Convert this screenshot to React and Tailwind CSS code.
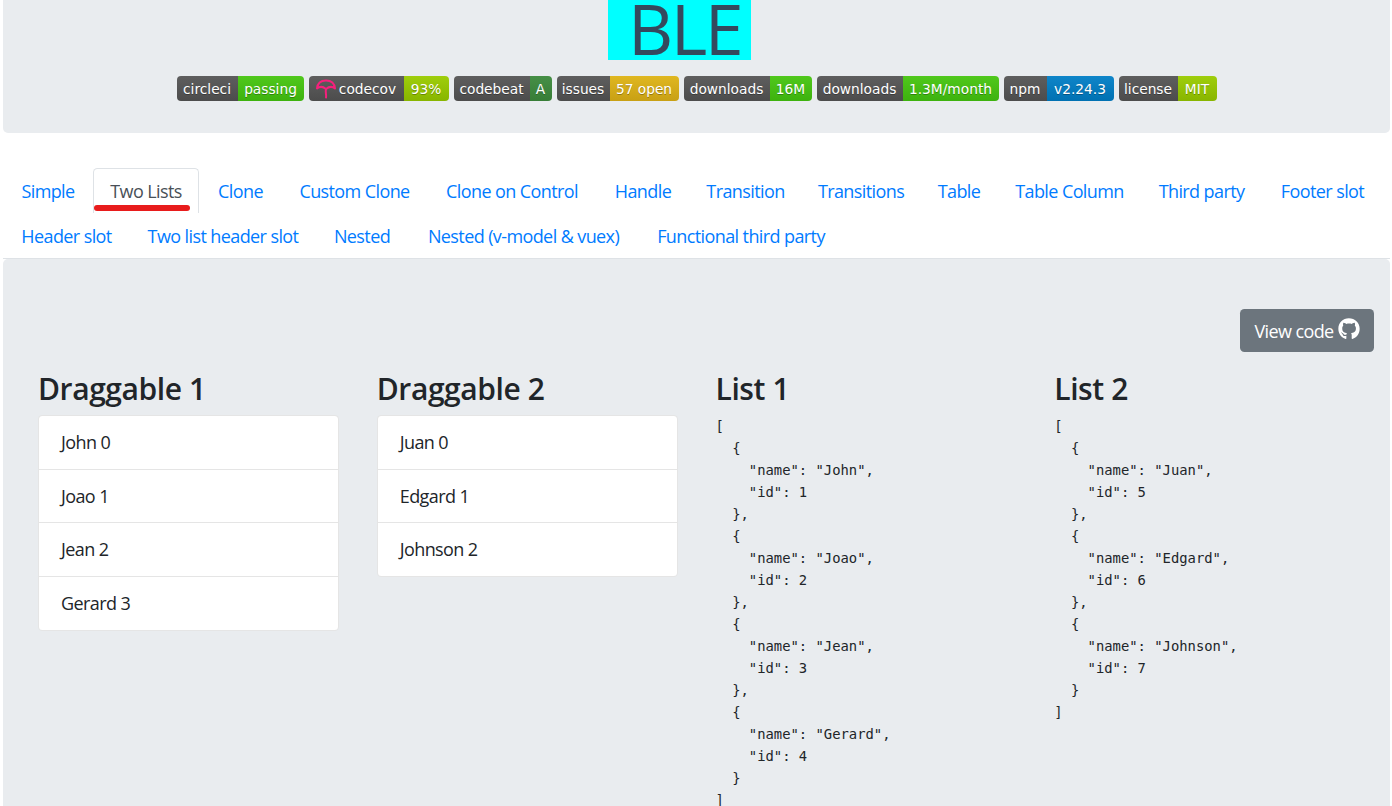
import { FaGithub } from 'react-icons/fa'

const BADGES = [
  { label: 'circleci', value: 'passing', w: 'w-[127px]', lw: 'w-[61px]', color: 'from-[#50c81c] to-[#3db20e]' },
  { label: 'codecov', value: '93%', w: 'w-[140px]', lw: 'w-[95px]', color: 'from-[#9fce0c] to-[#88b500]', icon: true },
  { label: 'codebeat', value: 'A', w: 'w-[98px]', lw: 'w-[76px]', color: 'from-[#468f46] to-[#377d37]' },
  { label: 'issues', value: '57 open', w: 'w-[122px]', lw: 'w-[53px]', color: 'from-[#e0b720] to-[#c8a014]' },
  { label: 'downloads', value: '16M', w: 'w-[128px]', lw: 'w-[86px]', color: 'from-[#50c81c] to-[#3db20e]' },
  { label: 'downloads', value: '1.3M/month', w: 'w-[182px]', lw: 'w-[86px]', color: 'from-[#50c81c] to-[#3db20e]' },
  { label: 'npm', value: 'v2.24.3', w: 'w-[110px]', lw: 'w-[43px]', color: 'from-[#0f85c9] to-[#0071b2]' },
  { label: 'license', value: 'MIT', w: 'w-[98px]', lw: 'w-[59px]', color: 'from-[#9fce0c] to-[#88b500]' },
]

const TABS = [
  { name: 'Simple', w: 'w-[90px]' },
  { name: 'Two Lists', w: 'w-[106px]', active: true },
  { name: 'Clone', w: 'w-[83px]' },
  { name: 'Custom Clone', w: 'w-[145px]' },
  { name: 'Clone on Control', w: 'w-[170px]' },
  { name: 'Handle', w: 'w-[92px]' },
  { name: 'Transition', w: 'w-[113px]' },
  { name: 'Transitions', w: 'w-[118px]' },
  { name: 'Table', w: 'w-[78px]' },
  { name: 'Table Column', w: 'w-[143px]' },
  { name: 'Third party', w: 'w-[121px]' },
  { name: 'Footer slot', w: 'w-[121px]' },
  { name: 'Header slot', w: 'w-[127px]' },
  { name: 'Two list header slot', w: 'w-[186px]' },
  { name: 'Nested', w: 'w-[92px]' },
  { name: 'Nested (v-model & vuex)', w: 'w-[231px]' },
  { name: 'Functional third party', w: 'w-[204px]' },
]

const LIST1 = ['John', 'Joao', 'Jean', 'Gerard']
const LIST2 = ['Juan', 'Edgard', 'Johnson']

const toJson = (names, firstId) =>
  JSON.stringify(names.map((name, i) => ({ name, id: firstId + i })), null, 2)

function CodecovIcon() {
  return (
    <svg viewBox="0 0 20 20" className="w-[20px] h-[20px] mr-[3px] shrink-0" fill="none" stroke="#f5207c" strokeWidth="2" strokeLinecap="round" strokeLinejoin="round">
      <path d="M1 9.500C1.500 4.500 5 1.500 10 1.500s8.500 3 9 8C16.500 7.500 13 7.500 10 10 7 7.500 3.500 7.500 1 9.500z" />
      <path d="M10 10c-.800 3 .500 5 0 8.500" />
    </svg>
  )
}

function Badge({ badge }) {
  return (
    <div className={`${badge.w} flex h-[25px] rounded-[4px] overflow-hidden text-white text-[13.75px] tracking-normal [font-family:'DejaVu_Sans',sans-serif] leading-[26px] [text-shadow:0_1px_0_rgba(1,1,1,0.3)]`}>
      <div className={`${badge.lw} shrink-0 flex items-center justify-center bg-linear-to-b from-[#5e5e5e] to-[#4c4c4c]`}>
        {badge.icon && <CodecovIcon />}
        {badge.label}
      </div>
      <div className={`flex-1 text-center bg-linear-to-b ${badge.color}`}>{badge.value}</div>
    </div>
  )
}

function Tab({ tab }) {
  if (tab.active) {
    return (
      <div className={`${tab.w} relative h-[45px] leading-[45px] text-center text-[#495057] bg-white border border-b-0 border-[#dee2e6] rounded-t-[4.5px] whitespace-nowrap`}>
        {tab.name}
        <span className="absolute left-0 top-[36px] w-[96px] h-[6px] rounded-full bg-[#e81c1c]" />
      </div>
    )
  }
  return <div className={`${tab.w} h-[45px] leading-[47px] text-center text-[#007bff] whitespace-nowrap`}>{tab.name}</div>
}

function Heading({ children }) {
  return <h3 className="text-[30px] leading-[42px] font-semibold tracking-[-0.4px] text-[#212529] mb-[5px]">{children}</h3>
}

function DragList({ title, items }) {
  return (
    <div className="px-[19px]">
      <Heading>{title}</Heading>
      <div className="bg-white border border-black/10 rounded-[4.5px]">
        {items.map((item, i) => (
          <div key={item} className="h-[53.5px] last:h-[53px] px-[22px] leading-[53px] text-[#212529] border-b border-black/10 last:border-b-0">
            {item} {i}
          </div>
        ))}
      </div>
    </div>
  )
}

function JsonList({ title, names, firstId }) {
  return (
    <div className="px-[19px]">
      <Heading>{title}</Heading>
      <pre className="text-[13.85px] leading-[22px] tracking-normal text-[#212529] [font-family:'DejaVu_Sans_Mono',monospace]">{toJson(names, firstId)}</pre>
    </div>
  )
}

export default function App() {
  return (
    <div className="h-[806px] overflow-hidden bg-white pl-[3px] pr-[2px] text-[18px] leading-[27px] [font-family:'Open_Sans',sans-serif] tracking-[-0.6px]">
      <header className="h-[133px] bg-[#e9ecef] rounded-b-[5px] flex flex-col items-center">
        <div className="mr-[34px] w-[143px] h-[60px] pl-[10px] bg-[#0ff] text-[#34495e] text-[70px] leading-[56px] tracking-[-2.5px] text-center">BLE</div>
        <div className="mt-[16px] flex gap-[5px]">
          {BADGES.map((b, i) => <Badge key={i} badge={b} />)}
        </div>
      </header>

      <nav className="mt-[35px] flex flex-wrap border-b border-[#dee2e6]">
        {TABS.map(t => <Tab key={t.name} tab={t} />)}
      </nav>

      <main className="bg-[#e9ecef] rounded-t-[5px] px-[16px] pt-[50px] h-[600px]">
        <div className="flex justify-end mb-[16px]">
          <div className="w-[134px] h-[43px] pt-[2px] rounded-[4.5px] bg-[#6c757d] text-white flex items-center justify-center gap-[4px]">
            View code <FaGithub className="w-[22px] h-[22px] -mt-[5px]" />
          </div>
        </div>
        <div className="grid grid-cols-4">
          <DragList title="Draggable 1" items={LIST1} />
          <DragList title="Draggable 2" items={LIST2} />
          <JsonList title="List 1" names={LIST1} firstId={1} />
          <JsonList title="List 2" names={LIST2} firstId={5} />
        </div>
      </main>
    </div>
  )
}
